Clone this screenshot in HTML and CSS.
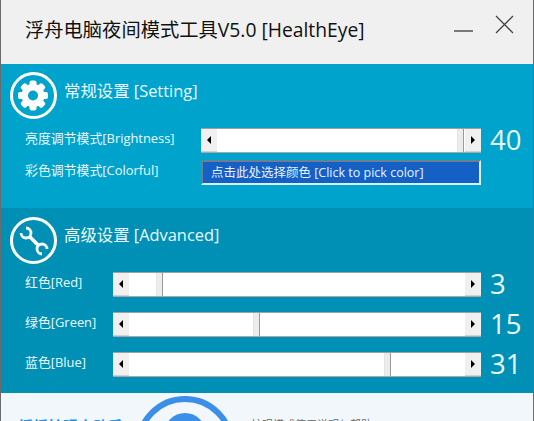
FILE: index.html
```html
<!DOCTYPE html>
<html lang="zh">
<head>
<meta charset="utf-8">
<title>HealthEye</title>
<link rel="stylesheet" href="styles.css">
</head>
<body>
<div class="window">
  <header class="titlebar">
    <h1 class="title">浮舟电脑夜间模式工具V5.0 [HealthEye]</h1>
    <div class="controls">
      <svg width="20" height="20" viewBox="0 0 20 20"><path d="M0 16H19" stroke="#444" stroke-width="1.4"/></svg>
      <svg width="20" height="20" viewBox="0 0 20 20"><path d="M1 1L18 18M18 1L1 18" stroke="#444" stroke-width="1.3" fill="none"/></svg>
    </div>
  </header>

  <section class="panel panel-setting">
    <div class="panel-head">
      <svg class="badge" width="48" height="48" viewBox="0 0 48 48">
        <circle cx="23.5" cy="23.500" r="22" fill="none" stroke="#fff" stroke-width="3"/>
        <g fill="#fff">
          <circle cx="23" cy="23.500" r="11.500"/>
          <rect x="19.500" y="8.500" width="7" height="30" rx="2"/>
          <rect x="19.500" y="8.500" width="7" height="30" rx="2" transform="rotate(45 23 23.500)"/>
          <rect x="19.500" y="8.500" width="7" height="30" rx="2" transform="rotate(90 23 23.500)"/>
          <rect x="19.500" y="8.500" width="7" height="30" rx="2" transform="rotate(135 23 23.500)"/>
        </g>
        <circle cx="23" cy="23.500" r="5" fill="#00a3cc"/>
      </svg>
      <h2 class="panel-title panel-title-setting">常规设置 [Setting]</h2>
    </div>
    <div class="row row-wide">
      <span class="label">亮度调节模式[Brightness]</span>
      <div class="scroll">
        <span class="arrow"><i class="tri tri-l"></i></span>
        <span class="track"><span class="fill" style="width:240px"></span><span class="thumb"></span></span>
        <span class="arrow"><i class="tri tri-r"></i></span>
      </div>
      <span class="value">40</span>
    </div>
    <div class="row row-wide row-color">
      <span class="label">彩色调节模式[Colorful]</span>
      <button class="pick">点击此处选择颜色 [Click to pick color]</button>
    </div>
  </section>

  <section class="panel panel-advanced">
    <div class="panel-head">
      <svg class="badge" width="48" height="48" viewBox="0 0 48 48">
        <circle cx="23.500" cy="23.500" r="22" fill="none" stroke="#fff" stroke-width="3"/>
        <g fill="none" stroke="#fff">
          <path d="M20 20L28 28" stroke-width="3.600"/>
          <path d="M16 11A5 5 0 1 1 11 16" stroke-width="2.800"/>
          <path d="M37 32A5 5 0 1 0 32 37" stroke-width="2.800"/>
        </g>
      </svg>
      <h2 class="panel-title">高级设置 [Advanced]</h2>
    </div>
    <div class="row">
      <span class="label">红色[Red]</span>
      <div class="scroll">
        <span class="arrow"><i class="tri tri-l"></i></span>
        <span class="track"><span class="fill" style="width:27px"></span><span class="thumb"></span></span>
        <span class="arrow"><i class="tri tri-r"></i></span>
      </div>
      <span class="value">3</span>
    </div>
    <div class="row">
      <span class="label">绿色[Green]</span>
      <div class="scroll">
        <span class="arrow"><i class="tri tri-l"></i></span>
        <span class="track"><span class="fill" style="width:124px"></span><span class="thumb"></span></span>
        <span class="arrow"><i class="tri tri-r"></i></span>
      </div>
      <span class="value">15</span>
    </div>
    <div class="row">
      <span class="label">蓝色[Blue]</span>
      <div class="scroll">
        <span class="arrow"><i class="tri tri-l"></i></span>
        <span class="track"><span class="fill" style="width:255px"></span><span class="thumb"></span></span>
        <span class="arrow"><i class="tri tri-r"></i></span>
      </div>
      <span class="value">31</span>
    </div>
  </section>

  <footer class="footer">
    <span class="brand">缓缓护眼小助手</span>
    <svg class="target" width="100" height="28" viewBox="0 0 100 28">
      <circle cx="50" cy="52.500" r="46.500" fill="none" stroke="#3b8fe8" stroke-width="6"/>
      <circle cx="50" cy="41" r="21" fill="#3b8fe8"/>
    </svg>
    <span class="note">护眼模式使用说明与帮助</span>
  </footer>
</div>
</body>
</html>
```

FILE: styles.css
```css
* { box-sizing: border-box; }
html, body { margin: 0; padding: 0; }
body {
  width: 534px;
  height: 421px;
  overflow: hidden;
  font-family: "Open Sans", "Noto Sans CJK SC", sans-serif;
}
.window {
  width: 534px;
  height: 421px;
  border-left: 1px solid #6b6b6b;
  border-right: 1px solid #6b6b6b;
  display: flex;
  flex-direction: column;
  overflow: hidden;
}
.titlebar {
  height: 64px;
  flex: none;
  background: #f0f0f0;
  display: flex;
  justify-content: space-between;
  padding: 0 18px 0 24px;
}
.title {
  margin: 19px 0 0;
  font-size: 19.3px;
  line-height: 22px;
  height: 22px;
  font-weight: 400;
  color: #111;
  white-space: nowrap;
}
.controls { display: flex; gap: 21px; padding-top: 15px; }
.panel { color: #fff; flex: none; }
.panel-setting { height: 144px; background: #00a3cc; padding-top: 8px; }
.panel-advanced { height: 185px; background: #008fb5; padding-top: 9px; }
.panel-head {
  display: flex;
  align-items: flex-start;
  padding-left: 9px;
  gap: 6px;
  height: 48px;
}
.panel-title {
  margin: 7px 0 0;
  font-size: 16.4px;
  line-height: 22px;
  font-weight: 400;
  color: #eafaff;
}
.panel-title-setting { margin-top: 8px; }
.row {
  display: flex;
  align-items: center;
  height: 25px;
  margin-top: 15px;
  padding-left: 24px;
}
.panel-advanced .row:nth-child(2) { margin-top: 7px; }
.panel-setting .row:nth-child(2) { margin-top: 8px; }
.panel-setting .row-color { margin-top: 7px; }
.label {
  width: 88px;
  margin-bottom: 6px;
  font-size: 12.9px;
  line-height: 16px;
  color: #eafaff;
  white-space: nowrap;
  flex: none;
}
.row-wide .label { width: 176px; }
.scroll {
  width: 368px;
  height: 25px;
  flex: none;
  display: flex;
  background: #fff;
  border-top: 1px solid #a0a0a0;
  border-bottom: 1px solid #a8a8a8;
}
.row-wide .scroll { width: 280px; }
.arrow {
  width: 16px;
  flex: none;
  background: #f0f0f0;
  display: flex;
  align-items: center;
  justify-content: center;
  border-bottom: 1px solid #d0d0d0;
}
.tri { width: 0; height: 0; border-top: 4px solid transparent; border-bottom: 4px solid transparent; }
.tri-l { border-right: 4px solid #000; }
.tri-r { border-left: 4px solid #000; }
.track { flex: 1; display: flex; }
.fill { flex: none; display: block; }
.thumb {
  width: 7px;
  flex: none;
  background: #ececec;
  border-right: 1px solid #9a9a9a;
  border-left: 1px solid #e4e4e4;
}
.value {
  margin-left: 9px;
  margin-bottom: 1px;
  font-size: 27.5px;
  line-height: 30px;
  color: #e6fbff;
  font-weight: 400;
}
.pick {
  width: 280px;
  height: 25px;
  flex: none;
  padding: 0 0 0 8px;
  background: #1560c4;
  border: 2px solid;
  border-color: #6a7f94 #d8f2fa #d8f2fa #6a7f94;
  color: #eaf2ff;
  font-family: inherit;
  font-size: 12.5px;
  line-height: 20px;
  text-align: left;
  white-space: nowrap;
}
.footer {
  height: 28px;
  flex: none;
  background: #f2f7fc;
  display: flex;
  position: relative;
}
.brand {
  position: absolute;
  left: 17px;
  top: 22px;
  font-size: 15px;
  line-height: 22px;
  color: #2a8fe0;
  font-weight: 700;
  white-space: nowrap;
}
.target { position: absolute; left: 134px; top: 0; }
.note {
  position: absolute;
  left: 250px;
  top: 24px;
  font-size: 11px;
  line-height: 16px;
  color: #666;
  white-space: nowrap;
}
```
